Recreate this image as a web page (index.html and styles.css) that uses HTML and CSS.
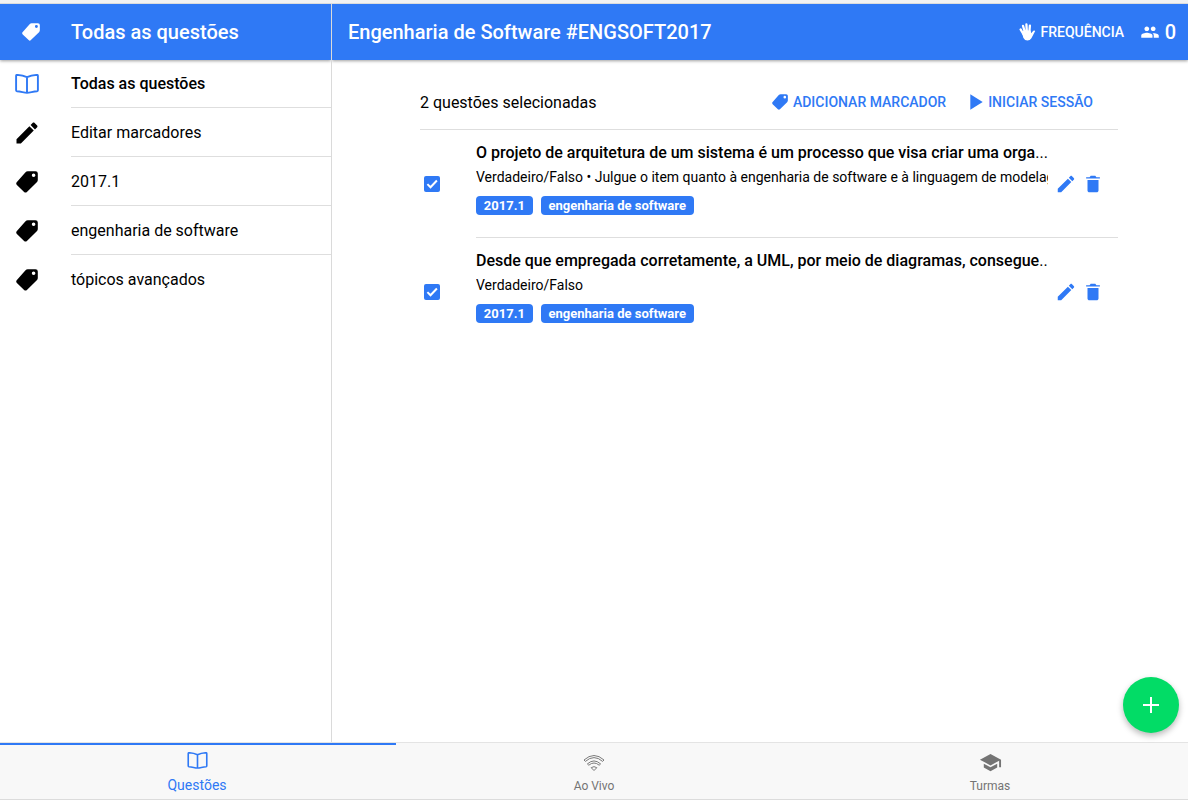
FILE: index.html
```html
<!DOCTYPE html>
<html lang="pt-BR">
<head>
<meta charset="utf-8">
<title>Engenharia de Software</title>
<link rel="stylesheet" href="styles.css">
</head>
<body>
<svg class="sprite" aria-hidden="true">
  <symbol id="tag" viewBox="0 0 22 22"><path fill-rule="evenodd" d="M11.8.2H19.5Q21.8.2 21.8 2.5V9Q21.8 10.3 20.8 11.2L10.9 20.9Q9.5 22.2 8.1 20.9L.9 14Q-.5 12.5.9 11.1L9.3 1.4Q10.4.2 11.8.2ZM17.6 2.5a1.8 1.8 0 1 0 0 3.6a1.8 1.8 0 1 0 0-3.6Z"/></symbol>
  <symbol id="book" viewBox="0 0 24 20"><path fill="none" stroke="currentColor" stroke-width="1.9" stroke-linejoin="round" d="M12 3.1C9 1.8 5.4 1.1 2 .9Q1.1.9 1.1 1.8V16.3Q1.1 17.2 2 17.3C5.8 17.5 9 18.8 12 18.9C15 18.8 18.2 17.5 22 17.3Q22.9 17.2 22.9 16.3V1.8Q22.9.9 22 .9C18.6 1.1 15 1.8 12 3.1ZV18.5"/></symbol>
  <symbol id="pencil" viewBox="0 0 512 512"><path d="M64 368v80h80l235.727-235.729-79.999-79.998L64 368zm377.602-217.602c8.531-8.531 8.531-21.334 0-29.865l-50.135-50.135c-8.531-8.531-21.334-8.531-29.865 0l-39.468 39.469 79.999 79.998 39.469-39.467z"/></symbol>
  <symbol id="trash" viewBox="0 0 512 512"><path d="M128 405.429C128 428.846 147.198 448 170.667 448h170.667C364.802 448 384 428.846 384 405.429V160H128v245.429zM416 96h-80l-26.785-32H202.786L176 96H96v32h320V96z"/></symbol>
  <symbol id="people" viewBox="0 0 512 512"><path d="M337.454 232c33.599 0 61.092-27.002 61.092-60 0-32.997-27.493-60-61.092-60s-61.09 27.003-61.09 60c0 32.998 27.491 60 61.09 60zm-162.908 0c33.599 0 61.09-27.002 61.09-60 0-32.997-27.491-60-61.09-60s-61.092 27.003-61.092 60c0 32.998 27.493 60 61.092 60zm0 44C126.688 276 32 298.998 32 346v54h288v-54c0-47.002-97.599-70-145.454-70zm162.908 11.003c-6.105 0-10.325 0-17.454.997 23.426 17.003 32 28.004 32 58v54h128v-54c0-47.002-94.688-58.997-142.546-58.997z"/></symbol>
  <symbol id="hand" viewBox="0 0 17 18"><path d="M3 9.5L4.5 7.5H11.6L12.2 10.2L14.3 7.8Q15.6 7 16.2 8L12.4 15.2Q11 17.5 8.4 17.5Q5.5 17.5 4.3 14.8Z"/><path fill="none" stroke="currentColor" stroke-width="2.3" stroke-linecap="round" d="M1.6 6.4L4.6 11.5M4 2.9L6.2 10M7.4 1.5L7.9 9.5M10.9 2.7L10.3 9.5"/></symbol>
  <symbol id="play" viewBox="0 0 13 16"><path d="M.3.3V15.7L12.7 8Z"/></symbol>
  <symbol id="school" viewBox="0 0 24 24"><path d="M5 13.18v4L12 21l7-3.82v-4L12 17l-7-3.82zM12 3L1 9l11 6 9-4.91V17h2V9L12 3z"/></symbol>
  <symbol id="wifi" viewBox="0 0 22 16"><g fill="none" stroke="currentColor" stroke-width=".95" stroke-linejoin="round"><path d="M1 5Q11-4 21 5L19.6 6.4Q11-1.2 2.4 6.4Z"/><path d="M4.4 8.9Q11 3 17.6 8.9L16.2 10.2Q11 5.8 5.8 10.2Z"/><path d="M8.2 12.7Q11 10.6 13.8 12.7L11 15.5Z"/></g></symbol>
  <symbol id="check" viewBox="0 0 16 16"><path fill="none" stroke="currentColor" stroke-width="2" d="M3.4 8.1L6.5 11.2L12.9 4.5"/></symbol>
</svg>
<div class="app">
  <div class="status-strip"></div>
  <div class="panes">
    <aside class="menu">
      <header class="toolbar menu-toolbar">
        <svg class="menu-toggle"><use href="#tag"/></svg>
        <h1 class="title">Todas as questões</h1>
      </header>
      <ul class="menu-list">
        <li class="menu-item active"><svg class="icon-book"><use href="#book"/></svg><span class="menu-label">Todas as questões</span></li>
        <li class="menu-item"><svg class="icon-pencil"><use href="#pencil"/></svg><span class="menu-label">Editar marcadores</span></li>
        <li class="menu-item"><svg class="icon-tag"><use href="#tag"/></svg><span class="menu-label">2017.1</span></li>
        <li class="menu-item"><svg class="icon-tag"><use href="#tag"/></svg><span class="menu-label">engenharia de software</span></li>
        <li class="menu-item"><svg class="icon-tag"><use href="#tag"/></svg><span class="menu-label">tópicos avançados</span></li>
      </ul>
    </aside>
    <main class="content">
      <header class="toolbar">
        <h1 class="title">Engenharia de Software #ENGSOFT2017</h1>
        <div class="attendance"><svg class="icon-hand"><use href="#hand"/></svg><span>FREQUÊNCIA</span></div>
        <div class="online"><svg class="icon-people"><use href="#people"/></svg><span>0</span></div>
      </header>
      <section class="questions">
        <div class="selection">
          <span class="selection-count">2 questões selecionadas</span>
          <div class="action add-tag"><svg class="icon-tag-small"><use href="#tag"/></svg><span>ADICIONAR MARCADOR</span></div>
          <div class="action"><svg class="icon-play"><use href="#play"/></svg><span>INICIAR SESSÃO</span></div>
        </div>
        <article class="question">
          <div class="checkbox"><svg><use href="#check"/></svg></div>
          <div class="question-body">
            <div class="question-text">
              <h2>O projeto de arquitetura de um sistema é um processo que visa criar uma orga<span class="dots">...</span></h2>
              <p>Verdadeiro/Falso • Julgue o item quanto à engenharia de software e à linguagem de modelag</p>
              <div class="badges"><span class="badge">2017.1</span><span class="badge">engenharia de software</span></div>
            </div>
            <div class="tools"><svg><use href="#pencil"/></svg><svg><use href="#trash"/></svg></div>
          </div>
        </article>
        <article class="question last">
          <div class="checkbox"><svg><use href="#check"/></svg></div>
          <div class="question-body">
            <div class="question-text">
              <h2>Desde que empregada corretamente, a UML, por meio de diagramas, consegue<span class="dots">..</span></h2>
              <p>Verdadeiro/Falso</p>
              <div class="badges"><span class="badge">2017.1</span><span class="badge">engenharia de software</span></div>
            </div>
            <div class="tools"><svg><use href="#pencil"/></svg><svg><use href="#trash"/></svg></div>
          </div>
        </article>
      </section>
      <div class="fab"><svg viewBox="0 0 16 16"><path d="M7 0H9V7H16V9H9V16H7V9H0V7H7Z"/></svg></div>
    </main>
  </div>
  <nav class="tabs">
    <div class="tab selected"><svg class="tab-book"><use href="#book"/></svg><span>Questões</span></div>
    <div class="tab"><svg class="tab-wifi"><use href="#wifi"/></svg><span>Ao Vivo</span></div>
    <div class="tab"><svg class="tab-school"><use href="#school"/></svg><span>Turmas</span></div>
  </nav>
</div>
</body>
</html>
```
FILE: styles.css
```css
* { box-sizing: border-box; }
body { margin: 0; font-family: Roboto, sans-serif; color: #000; background: #fff; }
h1, h2, p, ul { margin: 0; padding: 0; }
svg { display: block; flex: none; fill: currentColor; }
.sprite { position: absolute; width: 0; height: 0; }
.app { display: flex; flex-direction: column; height: 800px; overflow: hidden; }
.status-strip { height: 4px; flex: none; background: #f2f2f2; border-bottom: 1px solid #dcdcdc; }
.panes { display: flex; flex: 1; min-height: 0; }
.menu { width: 332px; border-right: 1px solid #dadada; }
.toolbar { display: flex; align-items: center; height: 56px; background: #2f79f5; color: #fff; box-shadow: 0 1px 3px rgba(0, 0, 0, .38); }
.title { font-size: 20px; font-weight: 500; line-height: 24px; white-space: nowrap; }
.menu .toolbar { clip-path: inset(0 0 -6px 0); }
.menu-toolbar { padding-left: 22px; }
.menu-toggle { width: 18px; height: 18px; margin-right: 31px; }
.menu-list { list-style: none; }
.menu-item { display: flex; align-items: center; height: 49px; padding-left: 16px; }
.menu-item:first-child { height: 48px; }
.menu-label { display: flex; align-items: center; flex: 1; height: 100%; border-bottom: 1px solid #dedede; font-size: 16px; }
.menu-item:last-child .menu-label { border-bottom-color: transparent; }
.active .menu-label { font-weight: 500; }
.icon-book { width: 24px; height: 20px; margin: 0 32px 1px -1px; color: #2f79f5; }
.icon-pencil { width: 28px; height: 28px; margin: 0 30px 0 -3px; }
.icon-tag { width: 22px; height: 22px; margin-right: 33px; }
.content { flex: 1; min-width: 0; position: relative; }
.content .toolbar { padding: 0 12px 0 16px; clip-path: inset(0 0 -6px 0); }
.attendance { display: flex; align-items: center; gap: 5px; margin-left: auto; font-size: 14px; font-weight: 500; }
.icon-hand { width: 17px; height: 18px; }
.online { display: flex; align-items: center; gap: 4.5px; margin-left: 16px; font-size: 20px; font-weight: 500; }
.icon-people { width: 20px; height: 20px; }
.questions { width: 698px; margin: 16px 0 0 88px; }
.selection { display: flex; align-items: center; height: 54px; padding-right: 25px; border-bottom: 1px solid #dedede; }
.selection-count { margin-right: auto; font-size: 16px; }
.action { display: flex; align-items: center; gap: 5px; color: #2f79f5; font-size: 14px; font-weight: 500; line-height: 16px; padding-bottom: 1px; }
.add-tag { margin-right: 24px; }
.icon-tag-small { width: 16px; height: 16px; }
.icon-play { width: 13px; height: 16px; }
.question { display: flex; align-items: center; height: 108px; }
.checkbox { width: 16px; height: 16px; margin: 0 36px 0 4px; border-radius: 2px; background: #2f79f5; color: #fff; }
.checkbox svg { width: 16px; height: 16px; }
.question-body { display: flex; flex: 1; height: 100%; border-bottom: 1px solid #dedede; min-width: 0; }
.last .question-body { border-bottom-color: transparent; }
.question-text { width: 572px; padding-top: 12px; flex: none; }
.question h2 { font-size: 16px; font-weight: 500; line-height: 22px; white-space: nowrap; overflow: hidden; }
.dots { font-weight: 400; }
.question p { margin-top: 3px; font-size: 14px; line-height: 20px; white-space: nowrap; overflow: hidden; }
.badges { display: flex; gap: 8px; margin-top: 9px; }
.badge { height: 19px; padding: 0 7.8px; border-radius: 4px; background: #2f79f5; color: #fff; font-size: 13px; font-weight: 700; line-height: 19px; }
.tools { display: flex; align-items: center; gap: 5px; margin-left: 7px; color: #2f79f5; }
.tools svg { width: 22px; height: 22px; }
.fab { position: absolute; right: 9px; bottom: 9px; display: flex; align-items: center; justify-content: center; width: 56px; height: 56px; border-radius: 50%; background: #02dc66; color: #fff; box-shadow: 0 3px 6px rgba(0, 0, 0, .28); }
.fab svg { width: 16px; height: 16px; }
.tabs { display: grid; grid-template-columns: repeat(3, 1fr); flex: none; height: 58px; background: #f8f8f8; border-top: 1px solid #e4e4e4; border-bottom: 1px solid #dcdcdc; }
.tab { display: flex; flex-direction: column; align-items: center; padding-top: 10px; color: #747474; font-size: 12px; line-height: 16px; }
.selected { border-top: 2px solid #2f79f5; padding: 7px 2px 0 0; color: #2f79f5; font-size: 14px; }
.tab-book { width: 21px; height: 17px; margin: 0 0 8px; }
.tab-wifi { width: 22px; height: 16px; margin: 2px 0 7px; }
.tab-school { width: 23px; height: 23px; margin: -2px 0 4px; }
```
